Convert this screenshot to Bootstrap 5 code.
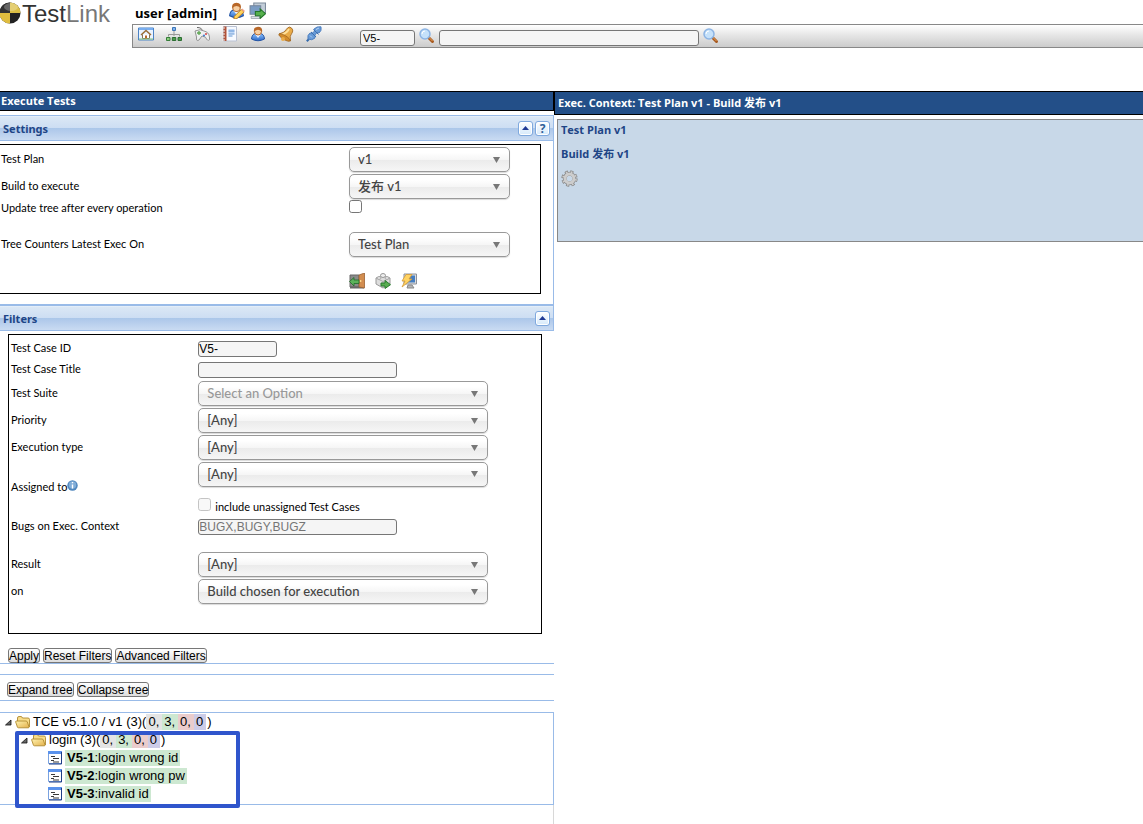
<!DOCTYPE html>
<html lang="en">
<head>
<meta charset="utf-8">
<meta name="viewport" content="width=device-width, initial-scale=1">
<title>TestLink - Execute Tests</title>
<link href="https://cdn.jsdelivr.net/npm/bootstrap@5.3.0/dist/css/bootstrap.min.css" rel="stylesheet">
<style>
body{font-family:Lato,"Noto Sans CJK SC",sans-serif;font-size:11px;line-height:16px;color:#000;background:#fff;font-variant-ligatures:none}
svg{display:block;flex:none}
.top-area{height:91px}
.brand-col{width:132px}
.brand-name{font-family:"Liberation Sans",Arial,sans-serif;font-size:24px;line-height:28px;color:#333}
.brand-name span{color:#777}
.user-line{height:24px;font-size:13px}
.user-line strong{padding:2px 3px 0}
.user-line svg{margin-bottom:4px}
.user-line strong,.title-bar,.context{font-family:"Open Sans","Noto Sans CJK SC",sans-serif}
.menu-strip{height:24px;border:1px solid #888;border-right:0;background:linear-gradient(#fff,#e4e4e4 50%,#ccc)}
.menu-icons{gap:12px;padding-left:5px;width:227px}
.field{height:16px;padding:0;border:1px solid #767676;border-radius:3px;background:#f5f5f5;font-family:"Liberation Sans",Arial,sans-serif;font-size:12px;line-height:14px;color:#000;min-height:0}
.field::placeholder{color:#757575;opacity:1}
.field-top{font-size:11px;padding:0 2px}
.panes{display:grid;grid-template-columns:554fr 589fr}
.title-bar{background:#234f88;color:#fff;border:1px solid #000;font-size:11px;font-weight:700;padding-left:1px}
.title-left{height:20px;line-height:18px;border-left:0}
.title-right{height:24px;line-height:22px;padding-left:3px;border-right:0}
.pane-edge{border-right:1px solid #99bbe8}
.panel-head{height:26px;border-top:1px solid #99bbe8;border-bottom:1px solid #99bbe8;background:linear-gradient(#e8f1fa 0,#dae7f5 6%,#cddef3 48%,#a9c6e9 49%,#b1caeb 60%,#c9dbf2);color:#1e4586;font-family:"Noto Sans",sans-serif;font-weight:700;padding:0 3px}
.panel-name{padding-top:2px}
.tools{gap:2px}
.tool{width:15px;height:15px;padding:0;border:1px solid #7fa9de;border-radius:3px;background:linear-gradient(#fff,#d5e9fb);box-shadow:inset 0 0 0 1px #fff;color:#2f6098;font-size:12px;font-weight:700;line-height:13px}
.form-box{border:1px solid #000}
.form-box.settings{border-left:0;margin:3px 12px 0 0;padding:1px 0 4px}
.form-box.filters{margin:3px 12px 0 8px;padding:3px 0 28px}
.form-line{display:grid;align-items:center;height:27px}
.settings .form-line{grid-template-columns:349fr 191fr}
.filters .form-line{grid-template-columns:189fr 342fr}
.name{padding:0 0 2px 1px}
.filters .name{padding-left:2px}
.line-short{height:21px}
.line-tick{height:16px}
.line-tick .tick{align-self:start}
.line-bugs{height:24px}
.line-who{height:54px}
.line-apart{margin:15px 0}
.line-below{margin-top:12px}
.pick{height:25px;padding:0 26px 0 8px;border:1px solid #999;border-radius:5px;font-size:13px;font-weight:500;line-height:23px;color:#444;background:url("data:image/svg+xml,%3Csvg xmlns='http://www.w3.org/2000/svg' width='8' height='6'%3E%3Cpath d='M0 0h7L3.500 6z' fill='%23777'/%3E%3C/svg%3E") no-repeat right 8px center,linear-gradient(#fff 20%,#f6f6f6 50%,#ebebeb 52%,#f6f6f6);box-shadow:0 1px 1px rgba(0,0,0,.15)}
.pick-s{width:161px}
.pick-l{width:290px}
.pick.empty{color:#999}
.tick{width:13px;height:13px;margin:0;border:1px solid #767676;border-radius:3px;background:#fff;min-height:0}
.tick:disabled{border-color:#c4c4c4;background:#f8f8f8;opacity:1}
.action-icons{gap:10px}
.panel-gap{height:11px;border-bottom:1px solid #99bbe8}
.push{font-family:"Liberation Sans",Arial,sans-serif;font-size:12px;line-height:13px;height:15px;padding:1px 0 0;border:1px solid #777;border-radius:3px;background:linear-gradient(#fff,#ddd);color:#000}
.push-row{gap:3px}
.filter-buttons{padding:14px 0 0 8px}
.tree-buttons{padding:7px 0 3px 7px}
.rule-strip{height:12px;border-top:1px solid #99bbe8;border-bottom:1px solid #99bbe8}
.tree-box{border:1px solid #99bbe8;border-left:0;height:93px;font-family:"Liberation Sans",Arial,sans-serif;font-size:13px;line-height:18px}
.tree-line{display:flex;align-items:center;height:18px;white-space:nowrap}
.folder-gap{margin:0 2px 0 3px}
.cnt{padding:0 3px 0 2px;line-height:16px;display:inline-block}
.c-none{background:#e4e4e4}
.c-pass{background:#cde8d1}
.c-fail{background:#eacccc}
.c-block{background:#cccce8;margin-right:1px}
.leaf{background:#cde8d1;padding:0 2px;line-height:16px;margin-left:2px;color:#000;text-decoration:none}
.lvl-1{padding-left:4px}
.lvl-2{padding-left:20px}
.lvl-3{padding-left:48px}
.marker{top:18px;left:15px;width:225px;height:77px;border:4px solid #2f55cc;border-radius:2px;pointer-events:none}
.tail{border-right:1px solid #d8d8d8}
.context{margin:4px 0 0 3px;height:123px;border:1px solid #888;border-right:0;background:#c8d8e8;color:#1e4586;font-weight:700;padding:2px 3px}
</style>
</head>
<body class="min-vh-100 d-flex flex-column">
<svg width="0" height="0" class="position-absolute" aria-hidden="true">
<defs>
<linearGradient id="gold" x2="1" y2="1"><stop stop-color="#fff3b0"/><stop offset="1" stop-color="#e3b04a"/></linearGradient>
<linearGradient id="blu" x2="0" y2="1"><stop stop-color="#8fc4ff"/><stop offset="1" stop-color="#2a68c8"/></linearGradient>
<symbol id="lens" viewBox="0 0 16 16"><path d="M9 9l4.500 4.500" stroke="#a85a20" stroke-width="3" stroke-linecap="round"/><path d="M9.500 9l4 4" stroke="#e8a35d" stroke-width="1"/><circle cx="6" cy="6" r="5" fill="#c5e1fa" stroke="#8cb4e4" stroke-width="1.500"/><path d="M3 6a3 3 0 0 1 3-3" stroke="#fff" fill="none"/></symbol>
<symbol id="folder" viewBox="0 0 16 16"><path d="M2.500 12.500V4q0-1.500 1.500-1.500h2q1 0 1.500 1.500h5.500q1.500 0 1.500 1.500V13" fill="#f7dc8a" stroke="#b08a30" stroke-width=".9"/><path d="M3.500 13.800q-1 0-1.200-1L.7 8q-.3-1 .8-1h9.500q1 0 1.300 1l1.700 4.800q.3 1-.8 1z" fill="url(#gold)" stroke="#b08a30" stroke-width=".9"/></symbol>
<symbol id="doc" viewBox="0 0 15 14"><path d="M.5.500h13v12H.5z" fill="#fff" stroke="#7aa2e0"/><path d="M0 0h14v3H0z" fill="#5a92ec"/><path d="M13.500 1v12H1" fill="none" stroke="#1f3f86"/><path d="M3 5.500h4M5 7.500h6M3 9.500h3M5 11h6" stroke="#222" stroke-width=".9"/></symbol>
<symbol id="open" viewBox="0 0 8 8"><path d="M7 2v5H1.500z" fill="#666" stroke="#111" stroke-width=".8"/></symbol>
<symbol id="man" viewBox="0 0 16 16"><path d="M1.500 13q.500-5 4-5.500h5q3.500.500 4 5.500-6.500 3.500-13 0z" fill="url(#blu)" stroke="#2454a4"/><path d="M5 8h6l-3 4z" fill="#e8f1ff"/><circle cx="8" cy="5.500" r="3.500" fill="#f8d0a2" stroke="#b86d32"/><path d="M4 6Q3 1 8 .7 13 1 12 6q-1-2-4-2.300Q5 4 4 6z" fill="#b86728"/></symbol>
</defs>
</svg>

<header class="top-area d-flex">
  <a href="#" class="brand-col d-flex text-decoration-none" aria-label="TestLink home">
    <svg width="22" height="25" viewBox="0 0 22 25"><circle cx="10" cy="13" r="10.500" fill="#222"/><path d="M10 13V2.500A10.500 10.500 0 0 0 0 10L-.5 13z" fill="#333"/><path d="M10 13V2.500A10.500 10.500 0 0 1 20.500 13z" fill="#dcbf45"/><path d="M10 13v10.500A10.500 10.500 0 0 1-.5 13z" fill="#e0bd3f"/><ellipse cx="11" cy="7" rx="7" ry="4" fill="#fff" opacity=".25"/></svg>
    <span class="brand-name">Test<span>Link</span></span>
  </a>
  <div class="flex-grow-1">
    <div class="user-line d-flex align-items-center">
      <strong>user [admin]</strong>
      <a href="#" class="ms-2" aria-label="My settings"><svg width="17" height="17" viewBox="0 0 16 16"><use href="#man"/><path d="M6 13.500L12.500 7l2.500 2.500L8.500 15.500 5.500 16z" fill="#ffd35c" stroke="#b9781c" stroke-width=".8"/><path d="M12.500 7l2.500 2.500 1-1L13.500 6z" fill="#f0a28c"/></svg></a>
      <a href="#" class="ms-1" aria-label="Logout"><svg width="17" height="17" viewBox="0 0 16 16"><path d="M4.500 1h11v9h-11z" fill="#c3ced9" stroke="#7d8b9c"/><path d="M1 3.500h10v8H1z" fill="#7a9cc4" stroke="#76859a"/><path d="M2 13.500h8v2H2z" fill="#dde2e7" stroke="#8d98a4" stroke-width=".7"/><path d="M6 9h4.500V6.500L15.500 11l-5 4.500V13H6z" fill="#56b04c" stroke="#24762a"/></svg></a>
    </div>
    <nav class="menu-strip d-flex align-items-center" aria-label="Main menu">
      <div class="menu-icons d-flex align-items-center pb-1">
        <a href="#" aria-label="Desktop"><svg width="16" height="16" viewBox="0 0 16 16"><path d="M.5 2h15v12H.5z" fill="#eaf3ff" stroke="#4b83c5"/><path d="M1 2h14v2H1z" fill="#79aef0"/><path d="M4.500 8.500v4h7v-4" fill="#fff" stroke="#867358"/><path d="M3 9l5-4.500L13 9" fill="none" stroke="#9a6d36" stroke-width="1.500"/><path d="M7 9.500h2V13H7z" fill="#b5672a"/><path d="M1 13h14" stroke="#8ac57b"/></svg></a>
        <a href="#" aria-label="Test specification"><svg width="16" height="16" viewBox="0 0 16 16"><path d="M8 5v5M2.500 10.500V8.500h11v2" fill="none" stroke="#999"/><path d="M6.500 1.500h3v3h-3z" fill="#7db1ee" stroke="#3e76b6"/><path d="M.5 11.500h3.500v3H.5z" fill="#8ccf7e" stroke="#357c39"/><path d="M6.300 11.500h3.500v3H6.300zM12 11.500h3.500v3H12z" fill="#4c9c4c" stroke="#2c6e32"/></svg></a>
        <a href="#" aria-label="Test execution"><svg width="16" height="16" viewBox="0 0 16 16"><path d="M8 4.500Q8 1.500 3 1.500" fill="none" stroke="#666"/><path d="M1 5l5-1.300 6 2q4 2 3.500 8-2 2-4-2.500L8 10l-3 4q-3 2-2.500-3z" fill="#eef0f1" stroke="#8a8a8a" stroke-width=".9"/><path d="M3 7h4M5 5v4" stroke="#5ca552" stroke-width="1.300"/><circle cx="12" cy="8" r="1" fill="#d84242"/><circle cx="10" cy="9.500" r="1" fill="#3976cd"/></svg></a>
        <a href="#" aria-label="Reports"><svg width="16" height="16" viewBox="0 0 16 16"><path d="M1.500.500h13v14.500h-13z" fill="#f7faff" stroke="#b9c1d2"/><path d="M1.500.500h3v14.500h-3z" fill="#b0533a"/><path d="M0 2h3M0 5h3M0 8h3M0 11h3M0 14h3" stroke="#eee"/><path d="M6.500 3h6v4.500h-6z" fill="#c2d9f7"/><path d="M6.500 5h6M6.500 8h6M6.500 10h4" stroke="#5c93d4"/></svg></a>
        <a href="#" aria-label="Users"><svg width="16" height="16"><use href="#man"/></svg></a>
        <a href="#" aria-label="Events"><svg width="16" height="16" viewBox="0 0 16 16"><path d="M1 8Q7 7 9.500 2q2-2 4 0t1 4Q11 10 12.500 15z" fill="#e9ab48" stroke="#9c611b" stroke-width=".8"/><path d="M3 9Q9 7 11 3" fill="none" stroke="#ffe099" stroke-width="1.800"/><ellipse cx="6.500" cy="11.500" rx="6.500" ry="2" transform="rotate(31 6.500 11.500)" fill="#d28b2b" stroke="#9c611b" stroke-width=".7"/><circle cx="5" cy="13" r="2" fill="#e9ab48"/></svg></a>
        <a href="#" aria-label="Plugins"><svg width="16" height="16" viewBox="0 0 16 16"><path d="M.8 15.200L3 13" stroke="#356aab" stroke-width="2"/><path d="M2 13q-1-4 2-6l2 .5L8.500 5 8 3Q11 0 15 .8q1 4-2 6.200l-2-.5L8.500 9.500l.5 2.500Q6 15 2 13z" fill="#689bd8" stroke="#4a7cbc" stroke-width=".9"/><path d="M5.500 5.500l4.500 4.500-3.500 2z" fill="#689bd8"/><path d="M5 6l5 5M7.500 3.500l5 5" stroke="#3d6fae" stroke-width="1"/><path d="M4 9.500l2 2M10 3.500l3-1.500" stroke="#b5d3f6"/></svg></a>
      </div>
      <input class="field field-top mt-1" style="width:55px" value="V5-" aria-label="Test case ID">
      <a href="#" class="ms-1" aria-label="Find"><svg width="16" height="16"><use href="#lens"/></svg></a>
      <input class="field field-top ms-1 mt-1" style="width:260px" aria-label="Search text">
      <a href="#" class="ms-1" aria-label="Search"><svg width="16" height="16"><use href="#lens"/></svg></a>
    </nav>
  </div>
</header>

<main class="panes flex-grow-1">
  <section class="d-flex flex-column">
    <h1 class="title-bar title-left m-0">Execute Tests</h1>
    <div class="pane-edge mt-1">
      <div class="panel-head d-flex align-items-center">
        <span class="panel-name flex-grow-1">Settings</span>
        <div class="tools d-flex">
          <button type="button" class="tool" aria-label="Collapse settings"><svg class="mx-auto" width="7" height="4" viewBox="0 0 7 4"><path d="M3.500 0L7 4H0z" fill="#203a94"/></svg></button>
          <button type="button" class="tool" aria-label="Help">?</button>
        </div>
      </div>
      <form class="form-box settings">
        <div class="form-line"><label class="name" for="plan">Test Plan</label><select id="plan" class="form-select pick pick-s"><option>v1</option></select></div>
        <div class="form-line"><label class="name" for="build">Build to execute</label><select id="build" class="form-select pick pick-s"><option>发布 v1</option></select></div>
        <div class="form-line line-tick"><label class="name" for="upd">Update tree after every operation</label><input id="upd" type="checkbox" class="form-check-input tick"></div>
        <div class="form-line line-apart"><label class="name" for="cnt">Tree Counters Latest Exec On</label><select id="cnt" class="form-select pick pick-s"><option>Test Plan</option></select></div>
        <div class="form-line line-tick"><span></span>
          <div class="action-icons d-flex">
            <a href="#" aria-label="Export test plan"><svg width="16" height="16" viewBox="0 0 16 16"><path d="M1 2h9v12H1z" fill="#8a8a8a" stroke="#666"/><path d="M1 14.500h14" stroke="#666" stroke-width="2"/><path d="M10 2l5.500-2v15L10 14z" fill="#d28d50" stroke="#9c6233" stroke-width=".8"/><circle cx="11.500" cy="8" r="1" fill="#ffe093"/><path d="M.5 8.500L5 4.500v2.500h5v3.500H5V13z" fill="#5bb25b" stroke="#21692a" stroke-width=".8"/></svg></a>
            <a href="#" aria-label="Import results"><svg width="16" height="16" viewBox="0 0 16 16"><path d="M1 5l7-3 7 3v6l-7 4-7-4z" fill="#ddd" stroke="#999"/><path d="M1 5l7 3.500L15 5M8 8.500V15" fill="none" stroke="#aaa"/><ellipse cx="8" cy="2.500" rx="2.500" ry="2" fill="#eee" stroke="#999"/><ellipse cx="4" cy="5" rx="2" ry="1.300" fill="#eee" stroke="#aaa"/><ellipse cx="12" cy="5" rx="2" ry="1.300" fill="#eee" stroke="#aaa"/><path d="M6 10h4V7.500l5.500 4.200L10 15.500V13H6z" fill="#59ad51" stroke="#287b2e"/></svg></a>
            <a href="#" aria-label="Refresh tree"><svg width="16" height="16" viewBox="0 0 16 16"><path d="M3 1h12.500v10H3z" fill="#ddd" stroke="#8a909a"/><path d="M4.500 2.500H14v7H4.500z" fill="#457ec2"/><path d="M7 12h4l2 3H6z" fill="#b6b6b6" stroke="#888"/><path d="M5 1.500h6L8 6h3L1 14l3-6H1z" fill="#ffd363" stroke="#d39a37" stroke-width=".8"/></svg></a>
          </div>
        </div>
      </form>
      <div class="panel-gap"></div>
      <div class="panel-head d-flex align-items-center">
        <span class="panel-name flex-grow-1">Filters</span>
        <button type="button" class="tool" aria-label="Collapse filters"><svg class="mx-auto" width="7" height="4" viewBox="0 0 7 4"><path d="M3.500 0L7 4H0z" fill="#203a94"/></svg></button>
      </div>
    </div>
    <form class="form-box filters">
      <div class="form-line line-short"><label class="name" for="tcid">Test Case ID</label><input id="tcid" class="field" style="width:79px" value="V5-"></div>
      <div class="form-line line-short"><label class="name" for="tct">Test Case Title</label><input id="tct" class="field" style="width:199px"></div>
      <div class="form-line"><label class="name" for="suite">Test Suite</label><select id="suite" class="form-select pick pick-l empty"><option>Select an Option</option></select></div>
      <div class="form-line"><label class="name" for="prio">Priority</label><select id="prio" class="form-select pick pick-l"><option>[Any]</option></select></div>
      <div class="form-line"><label class="name" for="etype">Execution type</label><select id="etype" class="form-select pick pick-l"><option>[Any]</option></select></div>
      <div class="form-line line-who">
        <label class="name d-flex align-items-center" for="who">Assigned to<svg width="11" height="11" viewBox="0 0 11 11" class="mb-1"><circle cx="5.500" cy="5.500" r="5.200" fill="#4f86bd"/><circle cx="5.500" cy="5" r="3.800" fill="#81add8"/><path d="M5.500 4.500v4M5.500 2v1.300" stroke="#fff" stroke-width="1.400"/></svg></label>
        <div>
          <select id="who" class="form-select pick pick-l mb-2"><option>[Any]</option></select>
          <div class="d-flex align-items-center gap-1"><input id="unas" type="checkbox" class="form-check-input tick" disabled><label for="unas" class="mt-1">include unassigned Test Cases</label></div>
        </div>
      </div>
      <div class="form-line line-bugs"><label class="name" for="bugs">Bugs on Exec. Context</label><input id="bugs" class="field" style="width:199px" placeholder="BUGX,BUGY,BUGZ"></div>
      <div class="form-line line-below"><label class="name" for="res">Result</label><select id="res" class="form-select pick pick-l"><option>[Any]</option></select></div>
      <div class="form-line"><label class="name" for="on">on</label><select id="on" class="form-select pick pick-l"><option>Build chosen for execution</option></select></div>
    </form>
    <div class="push-row filter-buttons d-flex"><button type="button" class="push">Apply</button><button type="button" class="push">Reset Filters</button><button type="button" class="push">Advanced Filters</button></div>
    <div class="rule-strip"></div>
    <div class="push-row tree-buttons d-flex"><button type="button" class="push">Expand tree</button><button type="button" class="push">Collapse tree</button></div>
    <div class="rule-strip border-bottom-0"></div>
    <div class="tree-box position-relative">
      <div class="tree-line lvl-1"><svg width="8" height="8"><use href="#open"/></svg><svg class="folder-gap" width="16" height="16"><use href="#folder"/></svg><span>TCE v5.1.0 / v1 (3)(<span class="cnt c-none">0,</span><span class="cnt c-pass">3,</span><span class="cnt c-fail">0,</span><span class="cnt c-block">0</span>)</span></div>
      <div class="tree-line lvl-2"><svg width="8" height="8"><use href="#open"/></svg><svg class="folder-gap" width="16" height="16"><use href="#folder"/></svg><span>login (3)(<span class="cnt c-none">0,</span><span class="cnt c-pass">3,</span><span class="cnt c-fail">0,</span><span class="cnt c-block">0</span>)</span></div>
      <div class="tree-line lvl-3"><svg width="15" height="14"><use href="#doc"/></svg><a href="#" class="leaf"><b>V5-1</b>:login wrong id</a></div>
      <div class="tree-line lvl-3"><svg width="15" height="14"><use href="#doc"/></svg><a href="#" class="leaf"><b>V5-2</b>:login wrong pw</a></div>
      <div class="tree-line lvl-3"><svg width="15" height="14"><use href="#doc"/></svg><a href="#" class="leaf"><b>V5-3</b>:invalid id</a></div>
      <div class="marker position-absolute"></div>
    </div>
    <div class="tail flex-grow-1"></div>
  </section>
  <section>
    <h2 class="title-bar title-right m-0">Exec. Context: Test Plan v1 - Build 发布 v1</h2>
    <div class="context">
      <div class="mb-2">Test Plan v1</div>
      <div class="mb-2">Build 发布 v1</div>
      <a href="#" aria-label="Toggle options"><svg class="mt-1" width="17" height="17" viewBox="0 0 16 16"><circle cx="8" cy="8" r="6" fill="none" stroke="#8a8a8a" stroke-width="3.400" stroke-dasharray="2.700 2.012"/><circle cx="8" cy="8" r="4.500" fill="none" stroke="#8a8a8a" stroke-width="3.600"/><circle cx="8" cy="8" r="6" fill="none" stroke="#cdcdcd" stroke-width="2" stroke-dasharray="1.500 3.212" stroke-dashoffset="-.6"/><circle cx="8" cy="8" r="4.200" fill="none" stroke="#cdcdcd" stroke-width="2.800"/></svg></a>
    </div>
  </section>
</main>
<script src="https://cdn.jsdelivr.net/npm/bootstrap@5.3.0/dist/js/bootstrap.bundle.min.js"></script>
</body>
</html>
